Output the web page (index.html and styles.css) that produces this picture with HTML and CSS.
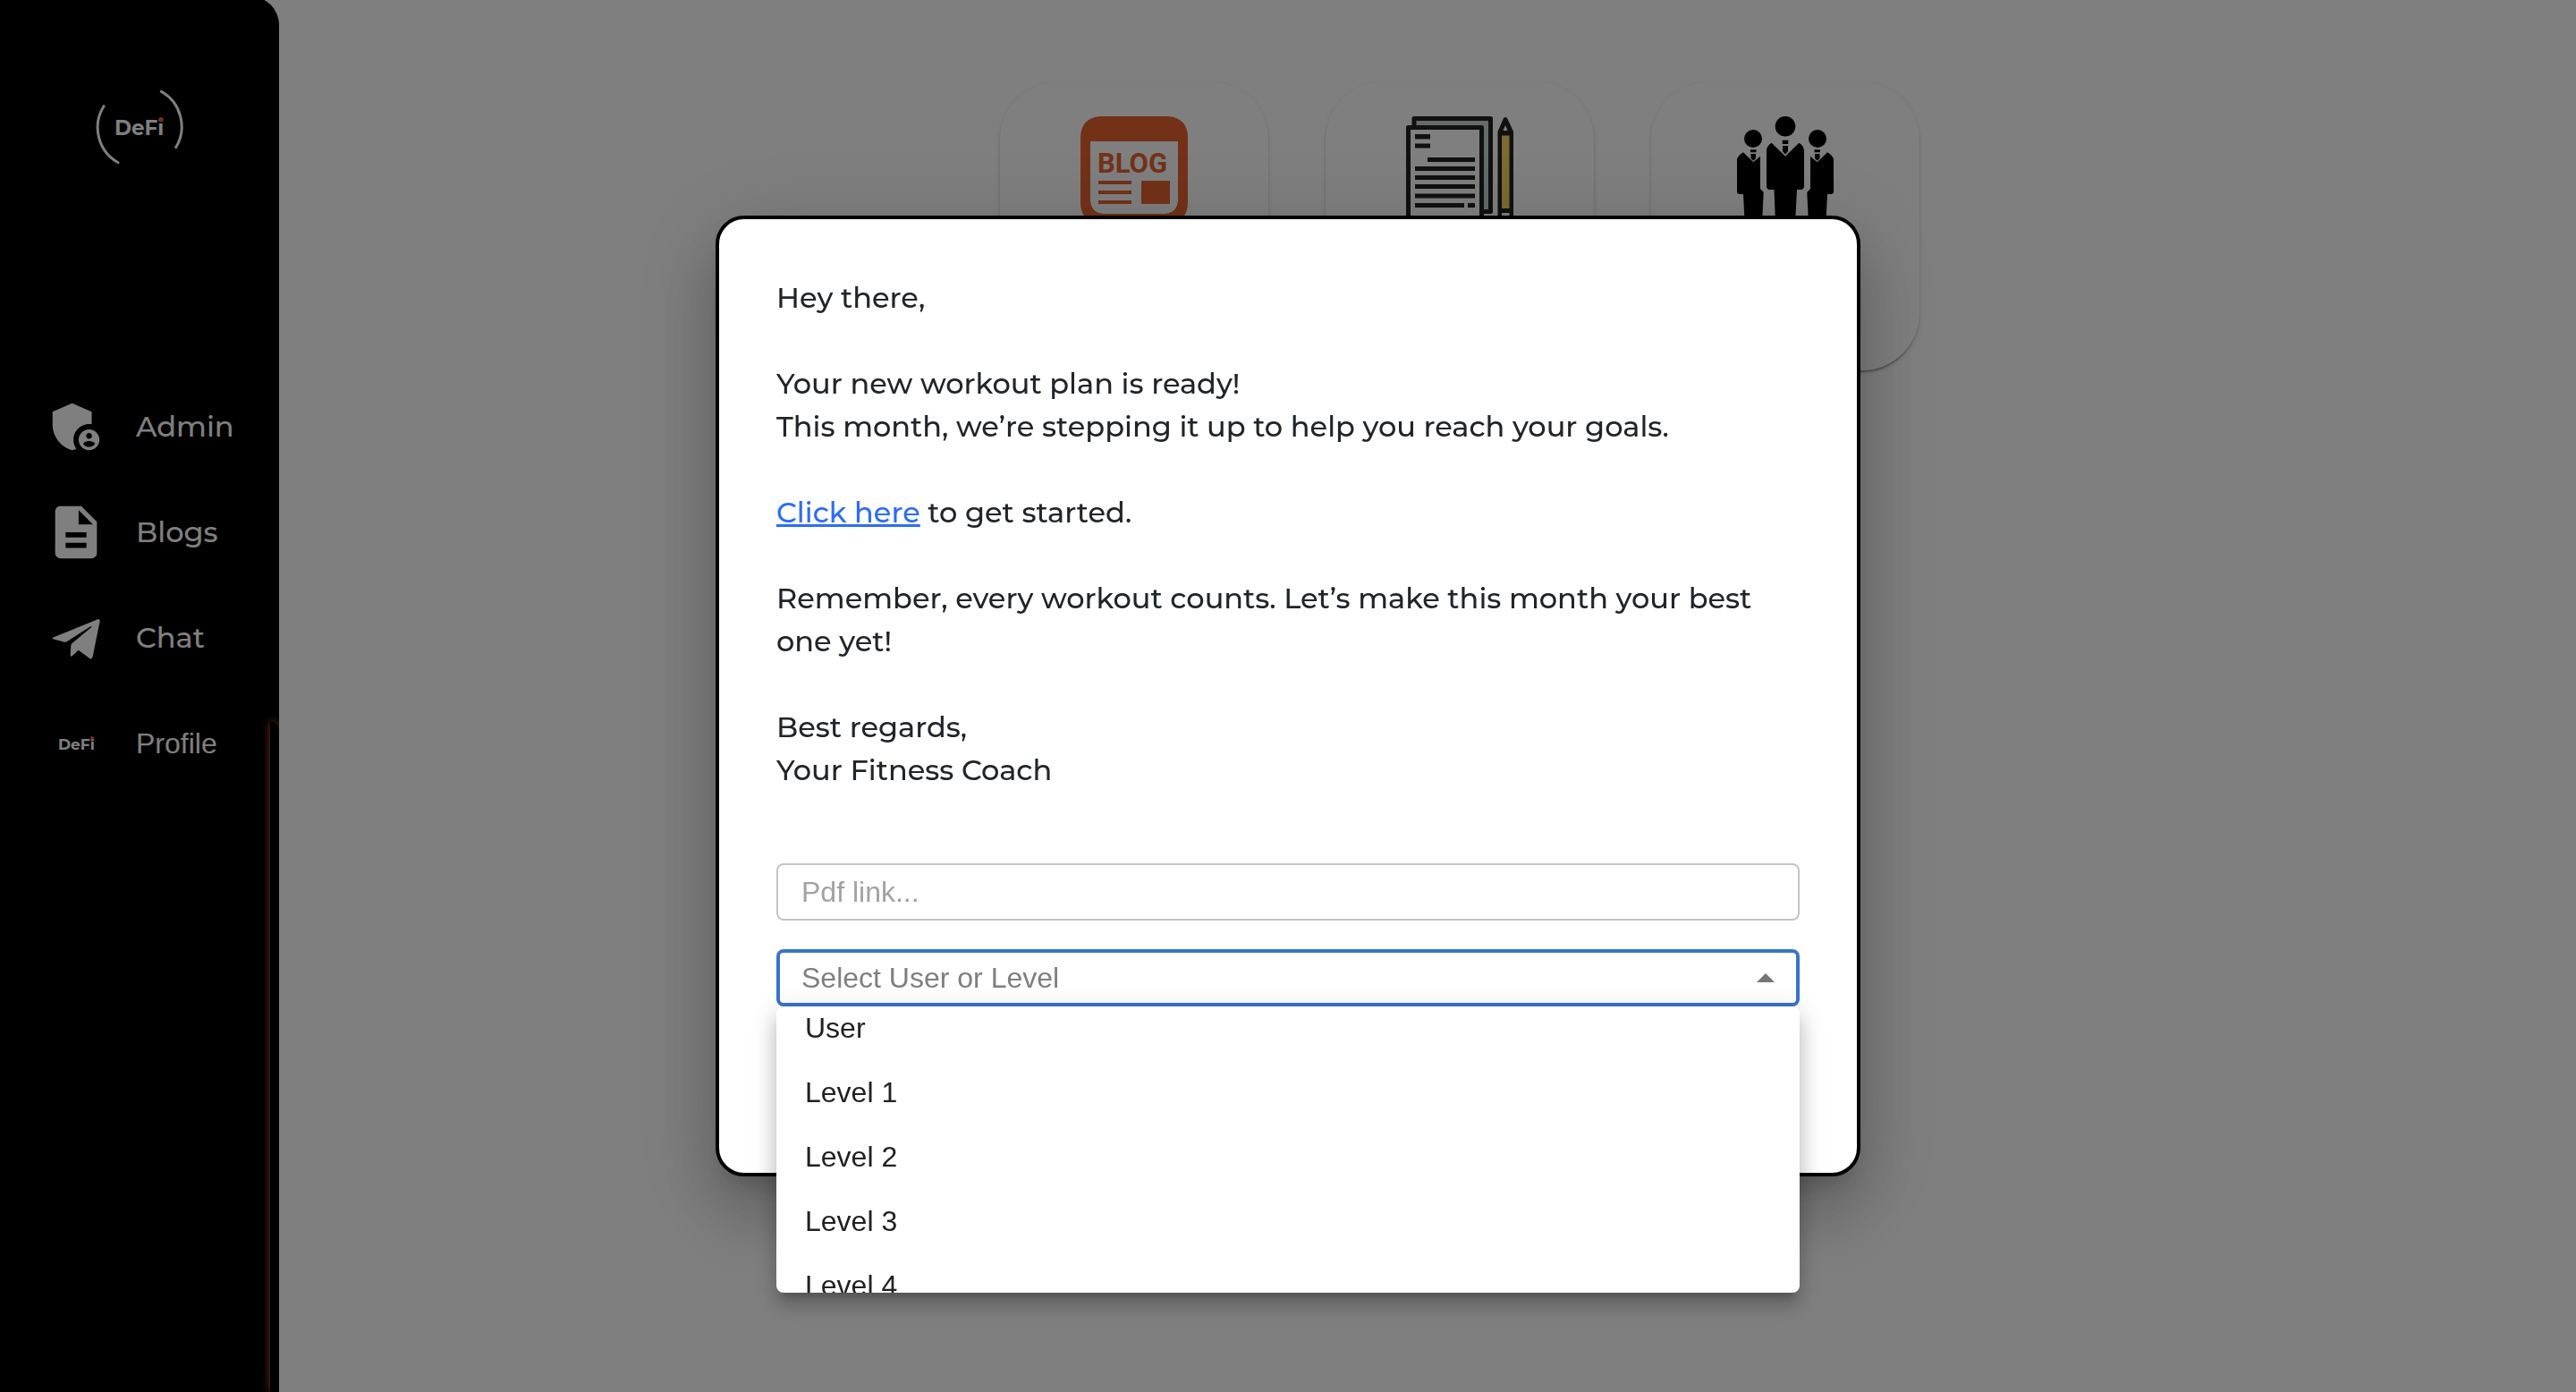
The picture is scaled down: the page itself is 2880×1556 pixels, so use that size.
FILE: index.html
```html
<!DOCTYPE html>
<html lang="en">
<head>
<meta charset="utf-8">
<meta name="viewport" content="width=device-width, initial-scale=1">
<title>DeFi Admin</title>
<link rel="stylesheet" href="styles.css">
</head>
<body>
<div class="app">
  <aside class="sidebar">
    <svg class="logo" viewBox="0 0 104 88" role="img" aria-label="DeFi">
      <path class="logo-arc" d="M12 22.700A45 45 0 0 0 28 85.700M76.300 6.300A45 45 0 0 1 92.700 68.700"/>
      <text class="logo-text" x="24" y="55" font-size="23">DeFi</text>
      <circle class="logo-dot" cx="76" cy="37.500" r="2.600"/>
    </svg>
    <nav class="nav">
      <a class="nav-link" href="#admin">
        <svg class="nav-icon" viewBox="0 0 24 24" aria-hidden="true"><path d="M17 11c.34 0 .67.04 1 .09V6.270L10.500 3 3 6.270v4.910c0 4.540 3.200 8.790 7.500 9.820.55-.13 1.080-.32 1.600-.55-.69-.98-1.100-2.170-1.100-3.450 0-3.310 2.690-6 6-6z"/><path d="M17 13c-2.210 0-4 1.790-4 4s1.790 4 4 4 4-1.790 4-4-1.790-4-4-4zm0 1.380c.62 0 1.120.51 1.120 1.120s-.51 1.120-1.120 1.120-1.120-.51-1.120-1.120.5-1.120 1.120-1.120zm0 5.370c-.93 0-1.740-.46-2.240-1.170.05-.72 1.510-1.080 2.240-1.080s2.190.36 2.240 1.080c-.5.71-1.310 1.170-2.240 1.170z"/></svg>
        <span>Admin</span>
      </a>
      <a class="nav-link" href="#blogs">
        <svg class="nav-icon" viewBox="0 0 24 24" aria-hidden="true"><path d="M14 2H6c-1.100 0-1.990.9-1.990 2L4 20c0 1.100.89 2 1.990 2H18c1.100 0 2-.9 2-2V8l-6-6zm2 16H8v-2h8v2zm0-4H8v-2h8v2zm-3-5V3.500L18.500 9H13z"/></svg>
        <span>Blogs</span>
      </a>
      <a class="nav-link" href="#chat">
        <svg class="nav-icon" viewBox="0 0 210 210" aria-hidden="true"><path d="M27 104 178 43Q186 41 185 49L161 168Q158 178 151 174L113 146 92 166Q86 169 86 163L88 131Q88 127 92 123L158 68Q156 65 151 68L74 118Q70 120 66 119L28 109Q23 106 27 104z"/></svg>
        <span>Chat</span>
      </a>
      <a class="nav-link nav-link-profile" href="#profile">
        <svg class="nav-icon" viewBox="0 0 70 70" aria-hidden="true">
          <text class="logo-text" x="15" y="42" font-size="17">DeFi</text>
          <circle class="logo-dot" cx="53" cy="29" r="2"/>
        </svg>
        <span>Profile</span>
      </a>
    </nav>
    <div class="sidebar-glow"></div>
  </aside>

  <main class="main">
    <div class="cards">
      <a class="card" href="#blog" aria-label="Blog">
        <svg class="card-icon" viewBox="0 0 120 120" aria-hidden="true">
          <path class="blog-ink" fill-rule="evenodd" d="M22 0H98Q120 2 120 24V96Q120 118 98 120H22Q0 118 0 96V24Q0 2 22 0zM11 28V94Q12 108 26 109H94Q108 108 109 94V28z"/>
          <text class="blog-text" x="19" y="63">BLOG</text>
          <path class="blog-ink" d="M20 72H57V76H20zM20 83H57V87H20zM20 94H57V98H20zM68 72H100V98H68z"/>
        </svg>
      </a>
      <a class="card" href="#plans" aria-label="Workout plans">
        <svg class="card-icon" viewBox="0 0 120 120" aria-hidden="true">
          <rect class="sheet-back" x="9" y="2.500" width="85.500" height="104"/>
          <rect class="sheet-front" x="2.500" y="12.500" width="82" height="105"/>
          <path class="sheet-ink" d="M10 20H27V25.500H10zM10 30.500H27V35.500H10zM24 46H77V51H24zM10 56H77V61H10zM10 66H77V71H10zM10 76H77V81H10zM10 86.500H77V91.500H10zM10 97H65V102H10zM69 97H77V102H69z"/>
          <path class="sheet-ink" fill-rule="evenodd" d="M109 2Q111 0 113 2L120 17V120H102.500V17zM111 10 108.500 16H113.500zM107 108H115.500V114H107z"/>
          <rect class="pencil" x="107" y="21.500" width="8.500" height="81.500"/>
        </svg>
      </a>
      <a class="card" href="#team" aria-label="Team">
        <svg class="card-icon" viewBox="0 0 120 120" aria-hidden="true">
          <circle cx="60" cy="11.300" r="11.300"/>
          <path d="M56.700 26.700H63.300V31H56.700zM57 33H63V39L60 42.500 57 39z"/>
          <path d="M44.700 29.700 60 44.700 75.300 29.700Q81 33 81 39V78Q81 82 77 82H73L71 120H49L47.500 82H43Q39 82 39 78V39Q39 33 44.700 29.700z"/>
          <g id="member">
            <circle cx="24" cy="25" r="10"/>
            <path d="M21 37.300H27.500V40.300H21zM21.500 42H27V47L24.300 49.700 21.500 47z"/>
            <path d="M13 40.300 24.300 51.300 32 44.700V81L35.700 85 34 120H14.700L13 87H9Q6 87 6 84V48Q7 44 13 40.300z"/>
          </g>
          <use href="#member" transform="matrix(-1 0 0 1 120 0)"/>
        </svg>
      </a>
    </div>
  </main>
</div>

<div class="backdrop">
  <div class="dialog" role="dialog" aria-modal="true" aria-label="Send workout plan">
    <div class="message">
      <p>Hey there,</p>
      <p>Your new workout plan is ready!<br>This month, we’re stepping it up to help you reach your goals.</p>
      <p><a class="message-link" href="#start">Click here</a> to get started.</p>
      <p>Remember, every workout counts. Let’s make this month your best one yet!</p>
      <p>Best regards,<br>Your Fitness Coach</p>
    </div>
    <form class="form">
      <input class="field" type="text" placeholder="Pdf link..." aria-label="Pdf link">
      <div class="picker">
        <select class="field field-focused" aria-label="Select User or Level">
          <option>Select User or Level</option>
        </select>
        <svg class="picker-arrow" viewBox="0 0 20 10" aria-hidden="true"><path d="M0 10 10 0 20 10z"/></svg>
        <div class="menu">
          <ul class="menu-list" role="listbox" aria-label="Recipients">
            <li class="menu-item" role="option">User</li>
            <li class="menu-item" role="option">Level 1</li>
            <li class="menu-item" role="option">Level 2</li>
            <li class="menu-item" role="option">Level 3</li>
            <li class="menu-item" role="option">Level 4</li>
          </ul>
        </div>
      </div>
    </form>
  </div>
</div>
</body>
</html>
```
FILE: styles.css
```css
* {
  box-sizing: border-box;
}

body {
  margin: 0;
  background: #fff;
  color: #212529;
  font-family: "Montserrat", "Inter", sans-serif;
  font-size: 32px;
  font-weight: 500;
  line-height: 48px;
}

.app {
  display: flex;
  min-height: 100vh;
  overflow: hidden;
}

/* Sidebar */
.sidebar {
  position: relative;
  flex: none;
  width: 312px;
  margin-top: -4px;
  padding-top: 100px;
  overflow: hidden;
  background: #000;
  border-radius: 0 32px 0 0;
  color: #fff;
}

.logo {
  display: block;
  width: 104px;
  height: 88px;
  margin: 0 auto;
}

.logo-arc {
  fill: none;
  stroke: #fff;
  stroke-width: 3;
  stroke-linecap: round;
}

.logo-text {
  fill: #fff;
  font-family: "Montserrat", "Open Sans", sans-serif;
  font-weight: 700;
}

.logo-dot {
  fill: #e66430;
}

.nav {
  display: flex;
  flex-direction: column;
  gap: 48px;
  margin-top: 258px;
  padding-left: 50px;
}

.nav-link {
  display: flex;
  align-items: center;
  gap: 32px;
  color: #fff;
  text-decoration: none;
}

.nav-link-profile {
  font-family: "Liberation Sans", sans-serif;
}

.nav-icon {
  width: 70px;
  height: 70px;
  fill: currentColor;
}

.sidebar-glow {
  position: absolute;
  top: 810px;
  right: 0;
  bottom: 0;
  width: 10px;
  background: #000;
  border-radius: 0 10px 0 0;
  box-shadow: 0 0 10px #e66430;
}

/* Cards */
.main {
  flex: 1;
  padding: 92px 0 92px 72px;
}

.cards {
  display: flex;
  justify-content: center;
  gap: 64px;
}

.card {
  display: flex;
  justify-content: center;
  width: 300px;
  min-height: 322px;
  padding: 38px 0;
  background: #fff;
  border-radius: 64px;
  box-shadow: 0 4px 2px -2px rgba(0, 0, 0, .2), 0 2px 2px rgba(0, 0, 0, .14), 0 2px 6px rgba(0, 0, 0, .12);
}

.card-icon {
  width: 120px;
  height: 120px;
  fill: #000;
}

.card-icon .blog-ink {
  fill: #e66430;
}

.blog-text {
  fill: #e66430;
  font-family: "Roboto", sans-serif;
  font-size: 31px;
  font-weight: 700;
}

.sheet-back,
.sheet-front {
  fill: #cad4d6;
  stroke: #222;
  stroke-width: 5;
  stroke-linejoin: round;
}

.sheet-front {
  fill: #fff;
}

.sheet-ink {
  fill: #222;
}

.pencil {
  fill: #fad460;
}

/* Dialog */
.backdrop {
  position: fixed;
  inset: 0;
  display: flex;
  align-items: center;
  justify-content: center;
  background: rgba(0, 0, 0, .5);
}

.dialog {
  width: 1280px;
  max-width: 100%;
  padding: 64px 64px 186px;
  background: #fff;
  border: 4px solid #000;
  border-radius: 32px;
  box-shadow: 0 22px 30px -14px rgba(0, 0, 0, .2), 0 48px 76px 6px rgba(0, 0, 0, .14), 0 18px 92px 16px rgba(0, 0, 0, .12);
}

.message {
  display: flex;
  flex-direction: column;
  gap: 48px;
}

.message p {
  margin: 0;
}

.message-link {
  color: #2b6df6;
}

.form {
  display: flex;
  flex-direction: column;
  gap: 32px;
  margin-top: 80px;
}

.field {
  display: block;
  width: 100%;
  height: 64px;
  padding: 0 26px;
  appearance: none;
  background: #fff;
  border: 2px solid #c4c4c4;
  border-radius: 8px;
  outline: none;
  font-family: "Liberation Sans", sans-serif;
  font-size: 32px;
}

.field::placeholder {
  color: #a2a2a2;
}

.field-focused {
  padding: 0 24px;
  border: 4px solid #3874cb;
  color: #7f7f7f;
}

.picker {
  position: relative;
}

.picker-arrow {
  position: absolute;
  top: 27px;
  right: 28px;
  width: 20px;
  height: 10px;
  fill: #757575;
}

.menu {
  position: absolute;
  top: 100%;
  left: 0;
  right: 0;
  height: 320px;
  overflow: hidden;
  background: #fff;
  border-radius: 8px;
  box-shadow: 0 10px 10px -6px rgba(0, 0, 0, .2), 0 16px 20px 2px rgba(0, 0, 0, .14), 0 6px 28px 4px rgba(0, 0, 0, .12);
  color: #212121;
  font-family: "Liberation Sans", sans-serif;
}

/* The list is scrolled slightly past its top padding */
.menu-list {
  margin: -12px 0 0;
  padding: 0;
  list-style: none;
}

.menu-item {
  padding: 12px 32px;
}
```
